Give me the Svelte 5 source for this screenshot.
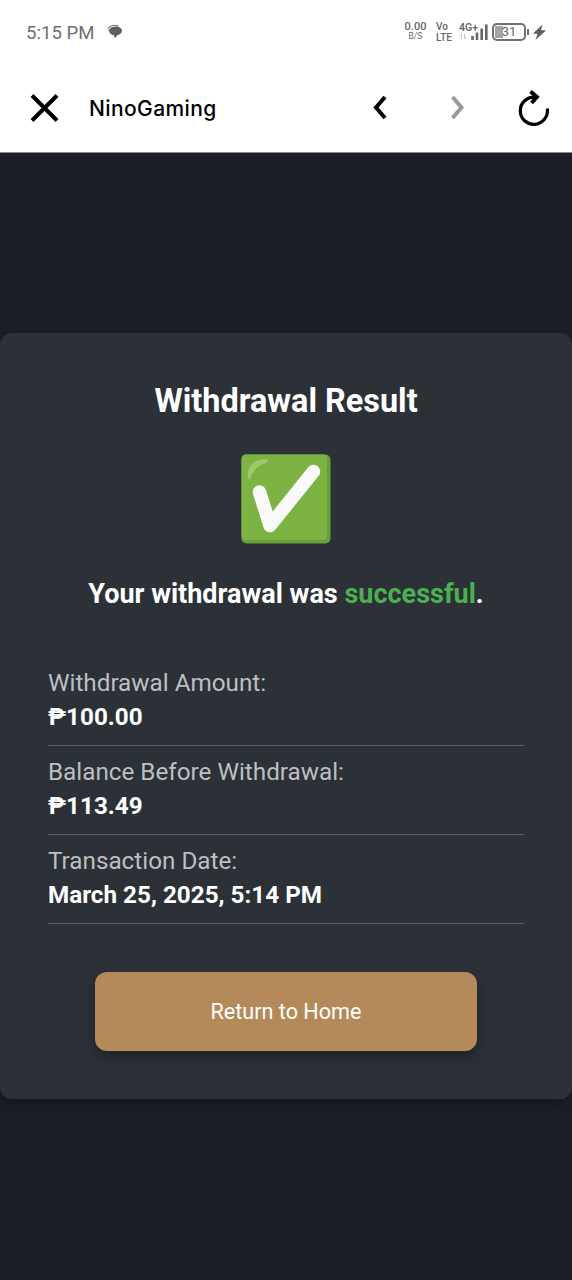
<script lang="ts">
  const details = [
    { label: 'Withdrawal Amount:', value: '₱100.00' },
    { label: 'Balance Before Withdrawal:', value: '₱113.49' },
    { label: 'Transaction Date:', value: 'March 25, 2025, 5:14 PM' },
  ];
</script>

<div class="screen">
  <header class="status-bar">
    <span class="time">5:15 PM</span>
    <svg class="chat" width="16" height="16" viewBox="0 0 16 16" aria-hidden="true">
      <path d="M1 5C2.500 1.200 8 .500 11.500 2" fill="none" stroke="#777" stroke-width="1.200" />
      <path d="M8.500 2.500c4 0 6.500 1.800 6.500 4.300 0 2.200-1.700 3.800-4.300 4.200L7.800 14.300 7 11.200C4 10.800 2.400 9.300 2.200 7.300L1 6.300 2.700 5.300C3.600 3.500 5.600 2.500 8.500 2.500Z" fill="#606060" />
    </svg>
    <div class="indicators">
      <div class="stack speed"><b>0.00</b><small>B/S</small></div>
      <div class="stack volte"><b>Vo</b><b>LTE</b></div>
      <div class="network">
        <b>4G+</b>
        <svg width="30" height="20" viewBox="0 0 30 20" aria-hidden="true">
          <path d="M2.500 12v5M1 13.500l1.500-1.500M5.500 12v5l1.500-1.500" fill="none" stroke="#c4c4c4" />
          <path d="M13.500 14v4M18 10.500V18M22.700 6.500V18M27.300 2.500V18" fill="none" stroke="#666" stroke-width="2.600" />
        </svg>
      </div>
      <div class="battery"><span>31</span></div>
      <svg class="bolt" width="15" height="17" viewBox="0 0 15 17" aria-hidden="true">
        <path d="M10.500 .500 1 9.500l4.500 .600L3.500 16 14 6.500l-5-.600Z" fill="#606060" />
      </svg>
    </div>
  </header>

  <nav class="toolbar">
    <button class="close" aria-label="Close">
      <svg width="30" height="30" viewBox="0 0 30 30"><path d="M3 2.500l25 25M28 2.500l-25 25" stroke="#000" stroke-width="4" /></svg>
    </button>
    <span class="site">NinoGaming</span>
    <button class="back" aria-label="Back">
      <svg width="14" height="26" viewBox="0 0 14 26"><path d="M12 2 3 12.500l9 10.500" fill="none" stroke="#000" stroke-width="4" /></svg>
    </button>
    <button class="forward" aria-label="Forward">
      <svg width="14" height="26" viewBox="0 0 14 26"><path d="M1.500 2 10.500 12.500 1.500 23" fill="none" stroke="#999" stroke-width="4" /></svg>
    </button>
    <button class="reload" aria-label="Reload">
      <svg width="32" height="36" viewBox="0 0 32 36">
        <path d="M29.300 18.500A13.600 13.600 0 1 1 17 7.200" fill="none" stroke="#000" stroke-width="3.200" />
        <path d="M12.500 1.500l6.500 5.500-5.500 6" fill="none" stroke="#000" stroke-width="3.800" />
      </svg>
    </button>
  </nav>

  <main>
    <section class="card">
      <h1>Withdrawal Result</h1>
      <svg class="check" width="90" height="90" viewBox="0 0 90 90" role="img" aria-label="Success">
        <rect x=".500" y=".500" width="89" height="89" rx="5" fill="#689f38" />
        <path d="M5 .500H82Q86 .500 86 5V81Q86 86 81 86H5Q.500 86 .500 81V5Q.500 .500 5 .500Z" fill="#7cb342" />
        <path d="M7 24C5 14 12 5 25 5c3 0 2 3 0 4C18 11 13 15 10 23c-1 3-2.600 3-3 1Z" fill="#aed581" opacity=".65" />
        <path d="M18.500 38 29 71.500 72.500 17.500" fill="none" stroke="#fafafa" stroke-width="13.500" stroke-linecap="round" stroke-linejoin="round" />
      </svg>
      <p class="message">Your withdrawal was <span>successful</span>.</p>

      <div class="details">
        {#each details as item (item.label)}
          <div class="row">
            <span>{item.label}</span>
            <strong>{item.value}</strong>
          </div>
        {/each}
      </div>

      <button class="home">Return to Home</button>
    </section>
  </main>
</div>

<style>
  :global(body) {
    margin: 0;
    background: #1c1f27;
  }

  .screen {
    display: flex;
    flex-direction: column;
    height: 1280px;
    overflow: hidden;
    font-family: Roboto, sans-serif;
  }

  button {
    padding: 0;
    border: 0;
    background: none;
    font: inherit;
  }

  svg {
    display: block;
  }

  .status-bar {
    display: flex;
    align-items: center;
    box-sizing: border-box;
    height: 64px;
    padding: 0 25px 0 26px;
    background: #fff;
    color: #666;
  }

  .time {
    width: 81px;
    padding-top: 1px;
    font-size: 18.6px;
    color: #707070;
  }

  .indicators {
    display: flex;
    align-items: center;
    margin-left: auto;
  }

  .stack {
    display: flex;
    flex-direction: column;
    align-items: center;
    font-size: 11px;
    line-height: 10px;
  }

  .stack b {
    font-weight: 500;
  }

  .speed {
    width: 23px;
    margin: 0 9px 2px 0;
  }

  .speed small {
    font-size: 8.5px;
    line-height: 9px;
  }

  .volte {
    align-items: flex-start;
    width: 18px;
    margin-right: 5px;
    font-size: 10px;
    line-height: 11px;
  }

  .network {
    display: grid;
    width: 30px;
    margin-right: 3px;
  }

  .network b,
  .network svg {
    grid-area: 1 / 1;
  }

  .network b {
    padding-top: 1px;
    font-size: 10.5px;
    font-weight: 600;
    line-height: 10px;
  }

  .battery {
    position: relative;
    box-sizing: border-box;
    width: 34px;
    height: 18px;
    margin-right: 6px;
    border: 2px solid #707070;
    border-radius: 5px;
    background: linear-gradient(#a5a5a5, #a5a5a5) 1px 1px / 8px 12px no-repeat;
    font-size: 13px;
    line-height: 14px;
    text-align: center;
  }

  .battery::after {
    content: '';
    position: absolute;
    top: 4px;
    right: -5px;
    width: 2px;
    height: 6px;
    background: #707070;
  }

  .toolbar {
    display: flex;
    align-items: center;
    box-sizing: border-box;
    height: 89px;
    padding: 0 22px 1px 29px;
    border-bottom: 1px solid #8b8b8e;
    background: #fff;
  }

  .site {
    flex: 1;
    margin-left: 30px;
    padding-top: 1px;
    font-family: Inter, sans-serif;
    font-size: 21px;
    font-weight: 500;
    letter-spacing: 0.4px;
  }

  .back {
    margin-right: 64px;
  }

  .forward {
    margin-right: 53px;
  }

  main {
    display: flex;
    flex: 1;
    align-items: center;
    padding-bottom: 1px;
    background: #1c1f27;
  }

  .card {
    display: flex;
    flex-direction: column;
    align-items: center;
    box-sizing: border-box;
    width: 100%;
    height: 766px;
    padding: 48px;
    border-radius: 12px;
    background: #2c3137;
    box-shadow: 0 6px 18px rgba(0, 0, 0, 0.3);
    color: #fff;
  }

  h1 {
    margin: 1px 0 0;
    font-size: 32.4px;
    line-height: 38px;
  }

  .check {
    margin-top: 34px;
  }

  .message {
    margin: 33px 0 0;
    font-size: 27px;
    font-weight: 700;
    line-height: 34px;
  }

  .message span {
    color: #4caf50;
  }

  .details {
    width: 100%;
    margin-top: 46px;
  }

  .row {
    display: flex;
    flex-direction: column;
    gap: 1px;
    padding: 10px 0 11px;
    border-bottom: 1px solid #5c6063;
    font-size: 24.25px;
    line-height: 33px;
  }

  .row span {
    color: #bdbfc0;
  }

  .home {
    width: 382px;
    height: 79px;
    margin-top: 48px;
    border-radius: 12px;
    background: #b48a5a;
    box-shadow: 0 6px 12px rgba(0, 0, 0, 0.3);
    color: #fff;
    font-size: 21.6px;
  }
</style>
